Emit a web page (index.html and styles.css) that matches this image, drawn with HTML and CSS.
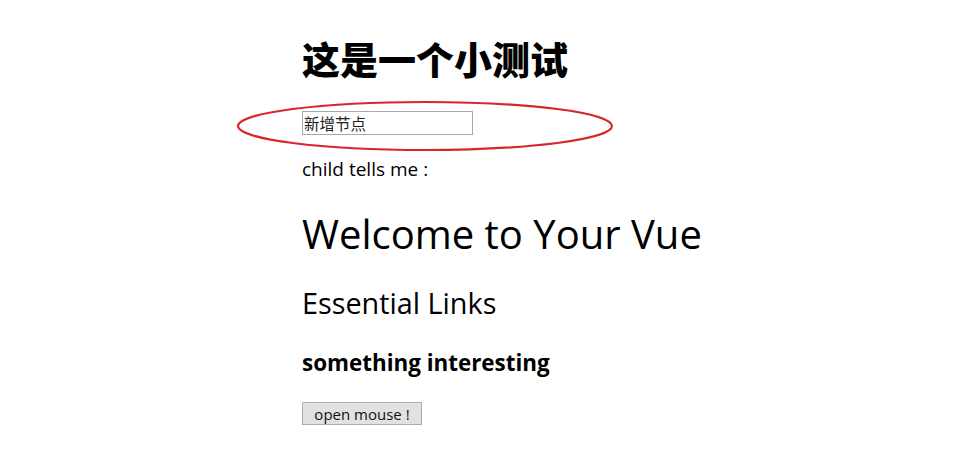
FILE: index.html
```html
<!DOCTYPE html>
<html>
<head>
<meta charset="utf-8">
<link rel="stylesheet" href="styles.css">
</head>
<body>
<div class="app">
  <h1 class="title">这是一个小测试</h1>
  <div class="input-row">
    <input class="node-input" type="text" value="新增节点">
    <svg class="ring" width="380" height="54" viewBox="0 0 380 54"><ellipse cx="190" cy="27" rx="187" ry="24" fill="none" stroke="#d9262b" stroke-width="2.2"/></svg>
  </div>
  <p class="child">child tells me :</p>
  <h2 class="welcome">Welcome to Your Vue</h2>
  <h3 class="links">Essential Links</h3>
  <h4 class="something">something interesting</h4>
  <button class="btn">open mouse !</button>
</div>
</body>
</html>
```
FILE: styles.css
```css
html, body { margin: 0; padding: 0; background: #fff; }
.app {
  padding-left: 302px;
  padding-top: 31px;
  font-family: "Open Sans", "Noto Sans", "Noto Sans CJK SC", sans-serif;
  color: #000;
}
.title {
  margin: 0;
  font-family: "Noto Sans CJK SC", sans-serif;
  font-weight: 900;
  font-size: 38px;
  line-height: 54px;
}
.input-row { position: relative; margin-top: 26px; height: 24px; }
.node-input {
  box-sizing: border-box;
  width: 171px; height: 24px;
  border: 1px solid #a9a9a9;
  padding: 0 1px;
  font-family: "Noto Sans CJK SC", sans-serif;
  font-size: 15.5px;
  color: #222;
  display: block;
}
.ring { position: absolute; left: -67px; top: -12px; pointer-events: none; }
.child {
  margin: 21px 0 0;
  font-size: 19px;
  line-height: 26px;
}
.welcome {
  margin: 24px 0 0;
  font-weight: 400;
  font-size: 40px;
  line-height: 56px;
}
.links {
  margin: 20px 0 0;
  font-weight: 400;
  font-size: 28.8px;
  line-height: 42px;
}
.something {
  margin: 23px 0 0;
  font-weight: 700;
  font-size: 22.4px;
  line-height: 32px;
}
.btn {
  margin-top: 23px;
  box-sizing: border-box;
  width: 120px; height: 23px;
  background: #e1e1e1;
  border: 1px solid #adadad;
  border-radius: 0;
  font-family: "Open Sans", sans-serif;
  font-size: 15px;
  color: #111;
  padding: 0;
}
```
